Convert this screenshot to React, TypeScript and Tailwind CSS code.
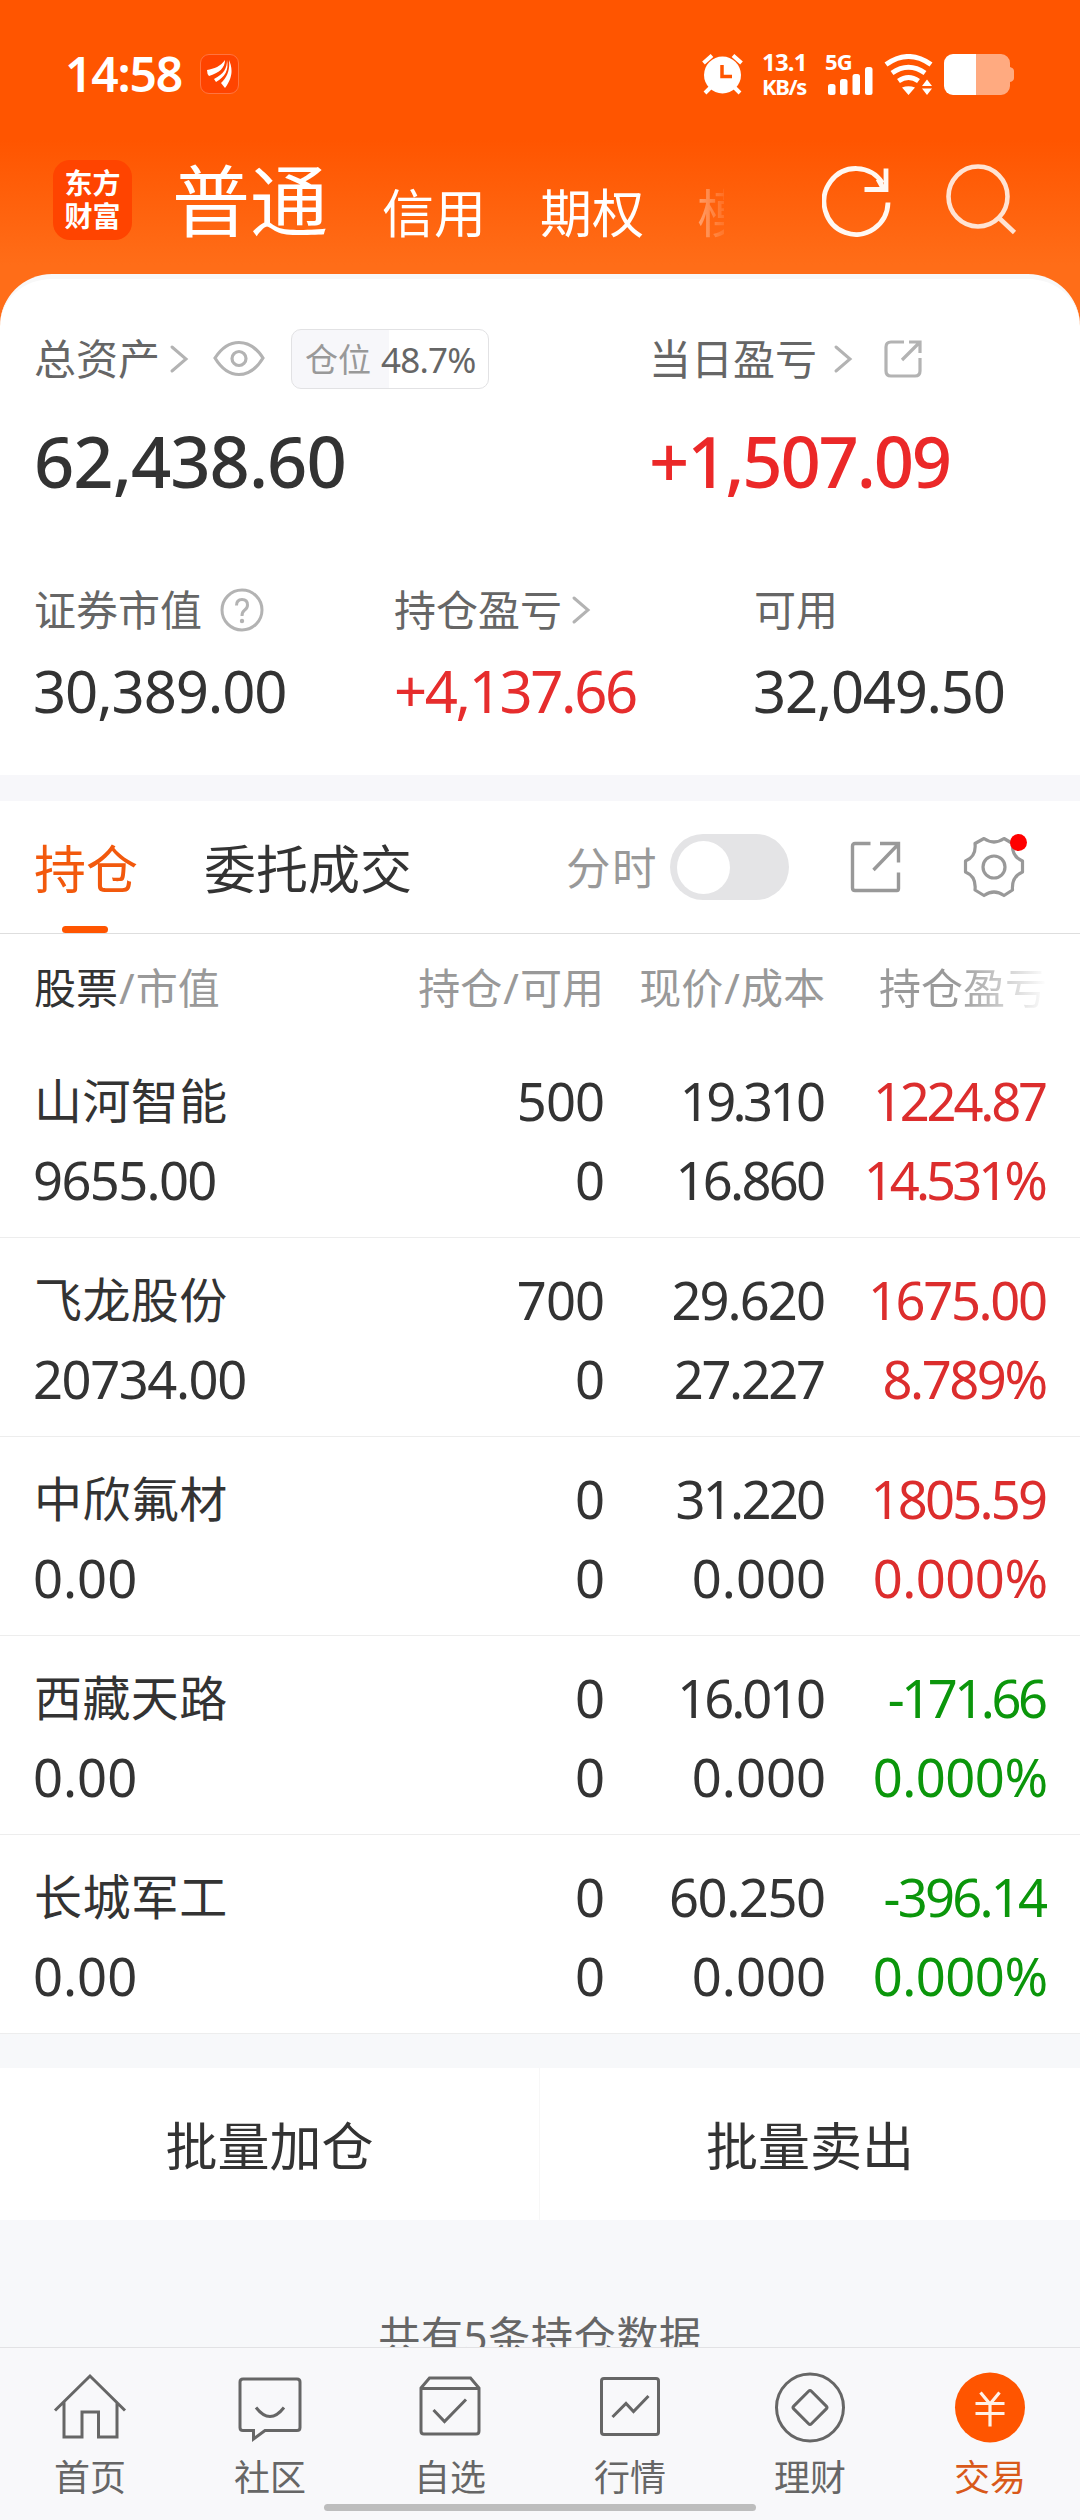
import type { ReactNode } from 'react';
import clsx from 'clsx';

const HOLDINGS = [
  { name: '山河智能', value: '9655.00', held: '500', usable: '0', price: '19.310', cost: '16.860', pnl: '1224.87', rate: '14.531%', up: true },
  { name: '飞龙股份', value: '20734.00', held: '700', usable: '0', price: '29.620', cost: '27.227', pnl: '1675.00', rate: '8.789%', up: true },
  { name: '中欣氟材', value: '0.00', held: '0', usable: '0', price: '31.220', cost: '0.000', pnl: '1805.59', rate: '0.000%', up: true },
  { name: '西藏天路', value: '0.00', held: '0', usable: '0', price: '16.010', cost: '0.000', pnl: '-171.66', rate: '0.000%', up: false },
  { name: '长城军工', value: '0.00', held: '0', usable: '0', price: '60.250', cost: '0.000', pnl: '-396.14', rate: '0.000%', up: false },
];

// the digits are proportional: "0" is the widest, "1" the narrowest
function Num({ children, className }: { children: string; className?: string }) {
  const ones = children.split('1').length - 1;
  const others = (children.match(/[2-9]/g) ?? []).length;
  const percent = children.endsWith('%') ? 0.06 : 0;
  const spacing = -(ones * 0.15 + others * 0.055 + percent) / children.length;
  return (
    <span className={className}>
      <span style={{ letterSpacing: `${spacing.toFixed(4)}em`, marginRight: `${(-spacing).toFixed(4)}em` }}>{children}</span>
    </span>
  );
}

function Chevron() {
  return (
    <svg width="20" height="32" viewBox="0 0 20 32" fill="none" stroke="#b3b3b3" strokeWidth="3" strokeLinecap="round">
      <path d="M3 4l14 12L3 28" />
    </svg>
  );
}

function StatusBar() {
  return (
    <div className="flex h-[148px] items-center pr-[66px] pl-[65px] text-white">
      <span className="w-[117px] text-[48px] leading-none font-semibold tracking-[-1.2px] whitespace-nowrap">14:58</span>
      <div className="ml-[18px] flex h-10 w-[39px] items-center justify-center rounded-[9px] border border-[#ff7440] bg-[#ff4400]">
        <svg width="26" height="28" viewBox="0 0 26 28" fill="#fff">
          <path d="M0 10C7 9 14 6 18 0C18 8 12 13 2 16Q0 14 0 10Z" />
          <path d="M20 0C20 8 17 14 7 19L9 22C18 17 22 10 20 0Z" />
          <path d="M22 0C25 7 27 16 18 28L14 23C21 16 23 9 22 0Z" />
        </svg>
      </div>
      <div className="ml-auto flex h-[42px] items-center">
        <svg width="41" height="42" viewBox="0 0 41 42" fill="none" stroke="#fff" strokeWidth="4">
          <circle cx="20.5" cy="22" r="18.5" fill="#fff" stroke="none" />
          <path d="M1.5 10L10 2.5M39.500 10L31 2.500M3 40l6-6M38 40l-6-6" />
          <path d="M20 12v11.500h10" stroke="#ff5500" strokeWidth="3.500" />
        </svg>
        <div className="ml-[19px] flex w-[47px] flex-col text-[24px] leading-[24px] font-bold">
          <span className="tracking-[-0.8px]">13.1</span>
          <span className="text-[22px] tracking-[-1.4px]">KB/s</span>
        </div>
        <div className="relative ml-[16px] h-[41px] w-[50px]">
          <span className="absolute -top-px left-0 text-[22px] leading-[17px] font-bold tracking-[-0.8px]">5G</span>
          <svg className="absolute inset-0" width="50" height="41" viewBox="0 0 50 41" fill="#fff">
            <rect x="3" y="30" width="7.500" height="11" rx="2.500" />
            <rect x="15" y="25" width="7.500" height="16" rx="2.500" />
            <rect x="27.500" y="20" width="7.500" height="21" rx="2.500" />
            <rect x="40" y="13" width="7.500" height="28" rx="2.500" />
          </svg>
        </div>
        <svg className="ml-[9px]" width="50" height="41" viewBox="0 0 50 41" fill="none" stroke="#fff" strokeWidth="5">
          <path d="M2 10.500Q24.500-5.500 47 10.500M8 19Q24.500 7.500 41 19M14.500 27Q24.500 20 34.500 27" />
          <path d="M18 33.500Q24.500 31 31 33.500L24.500 41ZM38 32h10l-5-6.500ZM38 34.500h10l-5 6.500Z" fill="#fff" stroke="none" />
        </svg>
        <svg className="ml-[10px]" width="70" height="41" viewBox="0 0 70 41">
          <path d="M32 0H57a9 9 0 0 1 9 9v4q4 1 4 4v7q0 3-4 4v4a9 9 0 0 1-9 9H32Z" fill="#ffaa80" />
          <path d="M32 0H9a9 9 0 0 0-9 9v23a9 9 0 0 0 9 9h23Z" fill="#fff" />
        </svg>
      </div>
    </div>
  );
}

function TitleBar() {
  return (
    <div className="flex h-[126px] items-start pt-3 pl-[53px] text-white">
      <div className="flex h-20 w-[79px] flex-col items-center justify-center rounded-[17px] bg-[#ff4400] text-[28px] leading-[33px] font-bold">
        <span>东方</span>
        <span>财富</span>
      </div>
      <div className="ml-10 flex h-[80px] items-end">
        <span className="text-[78px] leading-none">普通</span>
        <span className="mb-px ml-[54px] text-[52px] leading-none">信用</span>
        <span className="mb-px ml-[54px] text-[52px] leading-none">期权</span>
        <span className="mb-px ml-[53px] w-[27px] overflow-hidden bg-gradient-to-r from-white/40 to-white/10 bg-clip-text text-[52px] leading-none whitespace-nowrap text-transparent">模</span>
      </div>
      <svg className="mt-[5px] ml-[98px] shrink-0" width="70" height="72" viewBox="0 0 70 72" fill="none" stroke="#fff8f2" strokeWidth="4.800">
        <path d="M66 37.500A32 33 0 1 1 60.500 18" />
        <path d="M42.500 24.500H64V3.500" />
        <path d="M61 23l-5-9" />
      </svg>
      <svg className="ml-[54px] shrink-0" width="72" height="76" viewBox="0 0 72 76" fill="none" stroke="#ffe3d3" strokeWidth="4.600">
        <ellipse cx="32" cy="36.500" rx="29.500" ry="30" />
        <path d="M52 57l16.500 15.500" />
      </svg>
    </div>
  );
}

function Summary() {
  return (
    <div className="bg-[#ff6d18]">
      <div className="h-[501px] overflow-hidden rounded-t-[52px] border-t-[5px] border-[#f8f8f8] bg-white text-[42px] leading-none text-[#666]">
        <div className="flex pt-[50px]">
          <div className="w-[614px] pl-[34px]">
            <div className="flex h-[60px] items-center">
              <span>总资产</span>
              <div className="ml-[9px]"><Chevron /></div>
              <svg className="ml-[23px]" width="54" height="38" viewBox="0 0 54 38" fill="none" stroke="#b3b3b3" strokeWidth="3.200">
                <path d="M3 18Q13 2.500 27 2.500T51 18Q41 34.500 27 34.500T3 18Z" />
                <circle cx="27" cy="18.500" r="7" />
              </svg>
              <div className="ml-[25px] flex h-[60px] w-[198px] items-center rounded-[10px] border border-[#e2e2e4] bg-[linear-gradient(90deg,#f7f7fa_97px,#fff_97px)] pl-[13px]">
                <span className="text-[33px] text-[#999]">仓位</span>
                <span className="ml-[10px] text-[35px] tracking-[-0.8px]">48.7%</span>
              </div>
            </div>
            <div className="mt-[37px] text-[70.500px] font-medium tracking-[-1px] text-[#333]">62,438.60</div>
          </div>
          <div className="pl-[35px]">
            <div className="flex h-[60px] items-center">
              <span>当日盈亏</span>
              <div className="ml-[16px]"><Chevron /></div>
              <svg className="ml-[29px]" width="42" height="42" viewBox="0 0 42 42" fill="none" stroke="#b3b3b3" strokeWidth="3.200">
                <path d="M22 4H9Q4 4 4 9v24q0 5 5 5h24q5 0 5-5V20" />
                <path d="M20 22L37 5M27 4h11v11" />
              </svg>
            </div>
            <div className="mt-[37px] text-[70.500px] font-medium tracking-[-2.2px] text-[#eb2828]">+1,507.09</div>
          </div>
        </div>
        <div className="mt-[91px] grid grid-cols-[360px_360px_360px]">
          <div className="pl-[34px]">
            <div className="flex h-[44px] items-center">
              <span>证券市值</span>
              <svg className="ml-[17px]" width="46" height="46" viewBox="0 0 46 46" fill="none" stroke="#b3b3b3" strokeWidth="3">
                <circle cx="23" cy="23" r="20" />
                <path d="M17.500 18.500q0-6 5.500-6t5.500 5.500q0 3-2.800 5T23 29" />
                <circle cx="23" cy="34" r="2.200" fill="#b3b3b3" stroke="none" />
              </svg>
            </div>
            <div className="mt-[30px] ml-[-1px] text-[58px] tracking-[-1.1px] text-[#333]">30,389.00</div>
          </div>
          <div className="pl-[34px]">
            <div className="flex h-[44px] items-center">
              <span>持仓盈亏</span>
              <div className="ml-[9px]"><Chevron /></div>
            </div>
            <div className="mt-[30px] text-[58px] tracking-[-2.4px] text-[#e62d2d]">+4,137.66</div>
          </div>
          <div className="pl-[34px]">
            <div className="flex h-[44px] items-center">可用</div>
            <div className="mt-[30px] ml-[-1px] text-[58px] tracking-[-1.3px] text-[#333]">32,049.50</div>
          </div>
        </div>
      </div>
    </div>
  );
}

function Tabs() {
  return (
    <div className="flex h-[133px] items-center border-b border-[#dedede] bg-white pl-[34px] leading-none">
      <div className="relative flex h-full items-center pt-[3px] text-[52px] text-[#f2590d]">
        持仓
        <div className="absolute bottom-0 left-7 h-[7px] w-[46px] rounded-full bg-[#ff5500]" />
      </div>
      <span className="ml-[66px] pt-[3px] text-[52px] text-[#333]">委托成交</span>
      <span className="ml-[154px] pt-[3px] text-[44.500px] tracking-[1.5px] text-[#999]">分时</span>
      <div className="ml-[12px] flex h-[66px] w-[119px] items-center rounded-full bg-[#e4e4e6] pl-[7px]">
        <div className="size-[53px] rounded-full bg-white" />
      </div>
      <svg className="ml-[60px]" width="54" height="54" viewBox="0 0 54 54" fill="none" stroke="#999" strokeWidth="3.400">
        <path d="M21.500 3.500H6q-2.500 0-2.500 2.500v42q0 2.500 2.500 2.500h42q1.500 0 1.500-2V32.500" />
        <path d="M31 3.500h18.500v19M24.500 30L49 4.500" />
      </svg>
      <div className="relative ml-[59px]">
        <svg width="64" height="64" viewBox="0 0 64 64" fill="none" stroke="#999" strokeWidth="3.200" strokeLinejoin="round">
          <path d="M22 3.500Q32 10.500 42 3.500L50.500 8.500Q49.500 21.500 60.500 26V37Q49.500 41.500 50.500 55L42 60.500Q32 53.500 22 60.500L13 55Q14.500 41.500 3.500 37V26Q14.500 21.500 13 8.500Z" />
          <circle cx="32" cy="32" r="11" />
        </svg>
        <div className="absolute -top-px left-[48px] size-[17px] rounded-full bg-[#f00]" />
      </div>
    </div>
  );
}

function Holdings() {
  return (
    <div className="bg-white leading-none">
      <div className="grid h-[105px] grid-cols-[354px_216px_221px_222px] items-center pt-[3px] pl-[34px] text-right text-[42px] text-[#999]">
        <span className="text-left"><span className="text-[#333]">股票</span><span className="px-[1px]">/</span>市值</span>
        <span>持仓<span className="px-[1px]">/</span>可用</span>
        <span>现价<span className="px-[1px]">/</span>成本</span>
        <span className="ml-auto bg-gradient-to-r from-[#999] from-45% to-white bg-clip-text text-transparent">持仓盈亏</span>
      </div>
      {HOLDINGS.map((row) => (
        <div
          key={row.name}
          className="grid h-[199px] grid-cols-[355px_216px_221px_222px] grid-rows-[79px_79px] border-b border-[#ededed] pt-[22px] pl-[34px] text-right text-[52.500px] leading-[79px] text-[#333]"
        >
          <span className="text-left text-[48px] tracking-[0.4px]">{row.name}</span>
          <Num>{row.held}</Num>
          <Num>{row.price}</Num>
          <Num className={clsx(row.up ? 'text-[#dc2d2d]' : 'text-[#0b960b]')}>{row.pnl}</Num>
          <Num className="-ml-px text-left">{row.value}</Num>
          <Num>{row.usable}</Num>
          <Num>{row.cost}</Num>
          <Num className={clsx(row.up ? 'text-[#dc2d2d]' : 'text-[#0b960b]')}>{row.rate}</Num>
        </div>
      ))}
    </div>
  );
}

function NavItem({ label, active, children }: { label: string; active?: boolean; children: ReactNode }) {
  return (
    <div className="flex flex-col items-center pt-[21px]">
      <svg width="76" height="76" viewBox="0 0 76 76" fill="none" stroke="#666" strokeWidth="3">
        {children}
      </svg>
      <span className={clsx('mt-[15px] text-[36px] leading-none', active ? 'text-[#d9591a]' : 'text-[#666]')}>{label}</span>
    </div>
  );
}

function BottomNav() {
  return (
    <div className="relative grid h-[173px] grid-cols-6 border-t border-[#e2e2e4] bg-[#f8f8fa]">
      <NavItem label="首页">
        <path d="M3 41.500L38 7l35 34.500M12 33v35h18V43h16.500v25H65V33" />
      </NavItem>
      <NavItem label="社区">
        <path d="M11 10h54q3 0 3 3v45.500q0 3-3 3H33L21.500 70V61.500H11q-3 0-3-3V13q0-3 3-3ZM24 38.500q14 18 28 0" />
      </NavItem>
      <NavItem label="自选">
        <path d="M9 19L17.500 9H58.500L67 19V62q0 3-3 3H12q-3 0-3-3ZM9 19.500H67M21.500 41L32.500 52.500L54 30.500" />
      </NavItem>
      <NavItem label="行情">
        <rect x="9.500" y="9.500" width="57" height="56" rx="2.500" />
        <path d="M20.500 48L34 34.500L41.500 42.500L56.500 27" />
      </NavItem>
      <NavItem label="理财">
        <circle cx="38" cy="38.500" r="33.500" />
        <rect x="25.500" y="26" width="25" height="25" rx="2" transform="rotate(45 38 38.500)" />
      </NavItem>
      <NavItem label="交易" active>
        <circle cx="38" cy="38.500" r="35" fill="#ff5500" stroke="none" />
        <path d="M28.500 23.500L38 35l9.500-11.500M23.500 34.500h29M23.500 44.500h29M38 34v23.500" stroke="#fff0e6" strokeWidth="3.200" />
      </NavItem>
      <div className="absolute bottom-[9px] left-[324px] h-[7px] w-[432px] rounded-full bg-[#bdbdbd]" />
    </div>
  );
}

export default function App() {
  return (
    <div className="flex h-[2520px] w-[1080px] flex-col overflow-hidden bg-[#f7f8fa] font-['Noto_Sans','Noto_Sans_CJK_SC',sans-serif]">
      <div className="bg-[linear-gradient(180deg,#ff5500_140px,#ff6d18_265px)]">
        <StatusBar />
        <TitleBar />
      </div>
      <Summary />
      <div className="h-[26px] bg-[#f7f7fa]" />
      <Tabs />
      <Holdings />
      <div className="mt-[34px] grid h-[152px] grid-cols-2 bg-white text-[52px] leading-none text-[#333]">
        <div className="flex items-center justify-center border-r border-[#f7f7f7] pt-[3px]">批量加仓</div>
        <div className="flex items-center justify-center pt-[3px]">批量卖出</div>
      </div>
      <div className="h-[127px] overflow-hidden pt-[95px] text-center text-[42px] leading-none tracking-[0.7px] text-[#666]">共有5条持仓数据</div>
      <BottomNav />
    </div>
  );
}
